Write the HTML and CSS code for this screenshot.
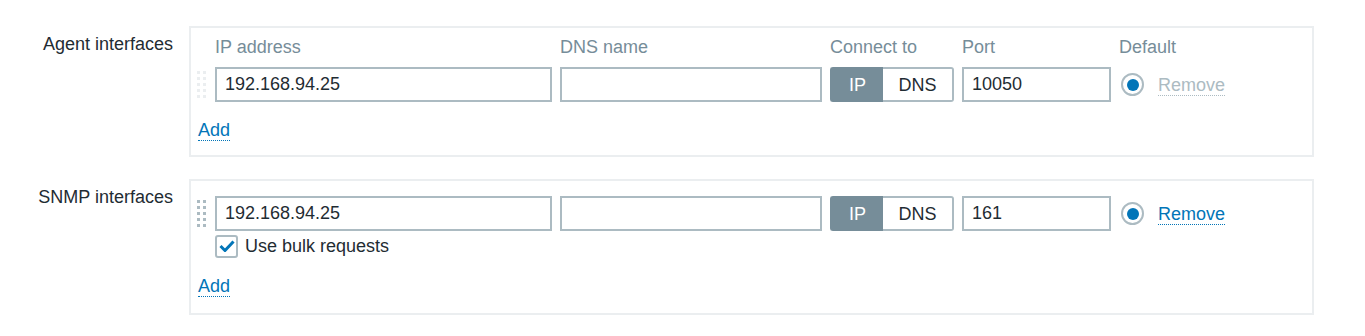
FILE: index.html
```html
<!DOCTYPE html>
<html>

<head>
    <meta charset="UTF-8">
    <title>Interfaces</title>
    <link rel="stylesheet" href="styles.css">
</head>

<body>
    <div class="form-list">
        <div class="form-row">
            <label class="form-label">Agent interfaces</label>
            <div class="iface-box agent">
                <div class="iface-table">
                    <div></div>
                    <div class="col-head">IP address</div>
                    <div class="col-head">DNS name</div>
                    <div class="col-head">Connect to</div>
                    <div class="col-head">Port</div>
                    <div class="col-head span-2">Default</div>

                    <div class="drag-cell">
                        <svg class="drag-handle light" width="9" height="27" viewBox="0 0 9 27">
                            <rect x="0" y="0" width="3" height="3" /><rect x="6" y="0" width="3" height="3" />
                            <rect x="0" y="6" width="3" height="3" /><rect x="6" y="6" width="3" height="3" />
                            <rect x="0" y="12" width="3" height="3" /><rect x="6" y="12" width="3" height="3" />
                            <rect x="0" y="18" width="3" height="3" /><rect x="6" y="18" width="3" height="3" />
                            <rect x="0" y="24" width="3" height="3" /><rect x="6" y="24" width="3" height="3" />
                        </svg>
                    </div>
                    <input class="text-field" type="text" value="192.168.94.25">
                    <input class="text-field" type="text" value="">
                    <div class="radio-switch">
                        <span class="switch-item active">IP</span>
                        <span class="switch-item">DNS</span>
                    </div>
                    <input class="text-field" type="text" value="10050">
                    <div class="radio-cell"><span class="radio checked"></span></div>
                    <div class="remove-cell"><a class="link disabled">Remove</a></div>
                </div>
                <div class="add-row"><a class="link">Add</a></div>
            </div>
        </div>

        <div class="form-row">
            <label class="form-label">SNMP interfaces</label>
            <div class="iface-box snmp">
                <div class="iface-table">
                    <div class="drag-cell">
                        <svg class="drag-handle" width="9" height="27" viewBox="0 0 9 27">
                            <rect x="0" y="0" width="3" height="3" /><rect x="6" y="0" width="3" height="3" />
                            <rect x="0" y="6" width="3" height="3" /><rect x="6" y="6" width="3" height="3" />
                            <rect x="0" y="12" width="3" height="3" /><rect x="6" y="12" width="3" height="3" />
                            <rect x="0" y="18" width="3" height="3" /><rect x="6" y="18" width="3" height="3" />
                            <rect x="0" y="24" width="3" height="3" /><rect x="6" y="24" width="3" height="3" />
                        </svg>
                    </div>
                    <input class="text-field" type="text" value="192.168.94.25">
                    <input class="text-field" type="text" value="">
                    <div class="radio-switch">
                        <span class="switch-item active">IP</span>
                        <span class="switch-item">DNS</span>
                    </div>
                    <input class="text-field" type="text" value="161">
                    <div class="radio-cell"><span class="radio checked"></span></div>
                    <div class="remove-cell"><a class="link">Remove</a></div>

                    <div></div>
                    <div class="check-row">
                        <span class="checkbox">
                            <svg width="16" height="12" viewBox="0 0 16 12">
                                <path d="M1.5 6 L6 10.5 L14.5 1.5" fill="none" stroke="#0275b8" stroke-width="3" />
                            </svg>
                        </span>
                        <span>Use bulk requests</span>
                    </div>
                </div>
                <div class="add-row"><a class="link">Add</a></div>
            </div>
        </div>
    </div>
</body>

</html>
```

FILE: styles.css
```css
body {
    margin: 8px;
    font-family: "Liberation Sans", Arial, sans-serif;
    font-size: 18px;
    line-height: 24px;
    color: #1f2c33;
    background: #fff;
}

.form-list {
    padding-top: 18px;
    display: flex;
    flex-direction: column;
    gap: 22px;
}

.form-row {
    display: grid;
    grid-template-columns: 165px 1125px;
    column-gap: 16px;
    align-items: start;
}

.form-label {
    text-align: right;
    padding-top: 6px;
}

.iface-box {
    border: 2px solid #ebeef0;
    padding: 7px 6px 13px 6px;
}

.iface-box.snmp {
    padding-top: 15px;
    padding-bottom: 15px;
}

.iface-table {
    display: grid;
    grid-template-columns: 10px 337px 262px 124px 149px 31px auto;
    column-gap: 8px;
    row-gap: 8px;
    align-items: center;
}

.snmp .iface-table {
    row-gap: 3px;
}

.col-head {
    color: #768d99;
}

.span-2 {
    grid-column: span 2;
}

.drag-cell {
    display: flex;
    align-items: center;
    height: 35px;
}

.drag-handle {
    fill: #acbbc2;
}

.drag-handle.light {
    fill: #ebeef0;
}

.text-field {
    box-sizing: border-box;
    width: 100%;
    height: 35px;
    margin: 0;
    border: 2px solid #acbbc2;
    padding: 0 8px;
    font-family: inherit;
    font-size: 18px;
    color: #1f2c33;
    background: #fff;
    outline: none;
}

.radio-switch {
    display: flex;
    height: 35px;
}

.switch-item {
    box-sizing: border-box;
    display: flex;
    align-items: center;
    justify-content: center;
    border: 2px solid #acbbc2;
    color: #1f2c33;
}

.switch-item:first-child {
    width: 53px;
    border-radius: 3px 0 0 3px;
    border-right: none;
}

.switch-item:last-child {
    flex: 1;
    border-radius: 0 3px 3px 0;
    border-left: none;
}

.switch-item.active {
    background: #768d99;
    border-color: #768d99;
    color: #fff;
}

.radio-cell {
    display: flex;
    align-items: center;
    padding-left: 2px;
}

.radio {
    box-sizing: border-box;
    width: 23px;
    height: 23px;
    border: 2px solid #acbbc2;
    border-radius: 50%;
    display: flex;
    align-items: center;
    justify-content: center;
}

.radio.checked::after {
    content: "";
    width: 12px;
    height: 12px;
    border-radius: 50%;
    background: #0275b8;
}

.link {
    color: #0275b8;
    border-bottom: 1px dotted #0275b8;
    cursor: pointer;
}

.link.disabled {
    color: #acbbc2;
    border-bottom-color: #acbbc2;
    cursor: default;
}

.check-row {
    grid-column: 2 / -1;
    display: flex;
    align-items: center;
    gap: 7px;
    height: 24px;
}

.checkbox {
    box-sizing: border-box;
    width: 23px;
    height: 23px;
    border: 2px solid #acbbc2;
    border-radius: 3px;
    display: flex;
    align-items: center;
    justify-content: center;
}

.add-row {
    margin-top: 16px;
    padding-left: 1px;
}
```
